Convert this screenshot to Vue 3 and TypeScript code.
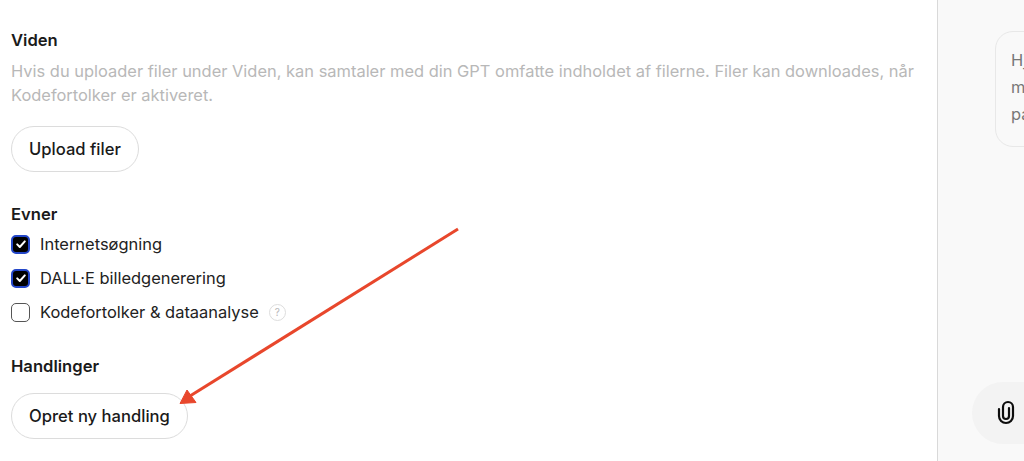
<script setup lang="ts">
const capabilities = [
  { label: 'Internetsøgning', checked: true, help: false },
  { label: 'DALL·E billedgenerering', checked: true, help: false },
  { label: 'Kodefortolker & dataanalyse', checked: false, help: true },
]
</script>

<template>
  <div class="page">
    <main class="editor">
      <section class="viden">
        <h2 class="title">Viden</h2>
        <p class="desc">Hvis du uploader filer under Viden, kan samtaler med din GPT omfatte indholdet af filerne. Filer kan downloades, når Kodefortolker er aktiveret.</p>
        <button class="btn">Upload filer</button>
      </section>
      <section class="evner">
        <h2 class="title">Evner</h2>
        <ul class="checks">
          <li v-for="c in capabilities" :key="c.label" class="check">
            <span class="box" :class="{ on: c.checked }">
              <svg v-if="c.checked" viewBox="0 0 12 12" width="12" height="12" fill="none">
                <path d="M2.200 6.400 4.800 9 9.800 3.400" stroke="#fff" stroke-width="2" stroke-linecap="round" stroke-linejoin="round" />
              </svg>
            </span>
            <span class="lbl">{{ c.label }}</span>
            <span v-if="c.help" class="help">?</span>
          </li>
        </ul>
      </section>
      <section class="handl">
        <h2 class="title">Handlinger</h2>
        <button class="btn">Opret ny handling</button>
      </section>
    </main>
    <aside class="preview">
      <div class="bubble">Hj<br />m<br />pa</div>
      <div class="composer">
        <svg viewBox="0 0 20 26" width="20" height="26" fill="none" stroke="#0d0d0d" stroke-width="2.200" stroke-linecap="round">
          <path d="M3 9v7a7 7 0 0 0 14 0V7a5 5 0 0 0-10 0v9a3 3 0 0 0 6 0V8" />
        </svg>
      </div>
    </aside>
    <svg class="arrow" viewBox="0 0 1024 461" width="1024" height="461">
      <path d="M458 229 190 396" stroke="#e8472c" stroke-width="3" fill="none" />
      <path d="M180 403.500 187 390 196 402.500Z" fill="#e8472c" stroke="#e8472c" stroke-width="1" />
    </svg>
  </div>
</template>

<style>
html, body { margin: 0; background: #fff; }
</style>

<style scoped>
.page {
  position: relative;
  width: 1024px;
  height: 461px;
  display: flex;
  overflow: hidden;
  font-family: Inter, "Liberation Sans", sans-serif;
  color: #0d0d0d;
}
.editor {
  width: 937px;
  box-sizing: border-box;
  padding: 30px 10px 0 11px;
  display: flex;
  flex-direction: column;
}
.title {
  margin: 0;
  font-size: 16.600px;
  line-height: 20px;
  font-weight: 600;
  color: #1a1a1a;
}
.desc {
  margin: 9px 0 0;
  width: 915px;
  font-size: 16.450px;
  line-height: 24px;
  color: #b8b8b8;
}
.btn {
  display: block;
  box-sizing: border-box;
  height: 46px;
  padding: 0 17px;
  border: 1px solid #dcdcdc;
  border-radius: 23px;
  background: #fff;
  font: 500 16.600px/20px Inter, "Liberation Sans", sans-serif;
  color: #1a1a1a;
}
.viden .btn { margin-top: 19px; }
.evner { margin-top: 32px; }
.checks {
  list-style: none;
  margin: 10px 0 0;
  padding: 0;
  display: flex;
  flex-direction: column;
  gap: 14px;
}
.check {
  display: flex;
  align-items: center;
  height: 20px;
  font-size: 16.450px;
  color: #222;
}
.box {
  box-sizing: border-box;
  width: 19px;
  height: 19px;
  margin-right: 10px;
  border: 1.500px solid #555;
  border-radius: 5px;
  display: flex;
  align-items: center;
  justify-content: center;
}
.box.on {
  background: #000;
  border: 2px solid #2346c8;
}
.help {
  margin-left: 10px;
  box-sizing: border-box;
  width: 17px;
  height: 17px;
  border: 1px solid #ddd;
  border-radius: 50%;
  font-size: 10px;
  line-height: 15px;
  text-align: center;
  color: #b8b8b8;
}
.handl { margin-top: 34px; }
.handl .btn { margin-top: 17px; }
.preview {
  flex: 1;
  position: relative;
  background: #f9f9f9;
  border-left: 1px solid #d9d9d9;
  overflow: hidden;
}
.bubble {
  position: absolute;
  left: 57px;
  top: 31px;
  width: 120px;
  height: 116px;
  box-sizing: border-box;
  padding: 15px 15px;
  background: #f9f9f9;
  border: 1px solid #e8e8e8;
  border-radius: 18px;
  font-size: 16.450px;
  line-height: 27px;
  color: #777;
}
.composer {
  position: absolute;
  left: 34px;
  top: 382px;
  width: 120px;
  height: 62px;
  box-sizing: border-box;
  padding: 18px 0 0 24px;
  border-radius: 31px;
  background: #f3f3f3;
}
.arrow {
  position: absolute;
  left: 0;
  top: 0;
  pointer-events: none;
}
</style>
